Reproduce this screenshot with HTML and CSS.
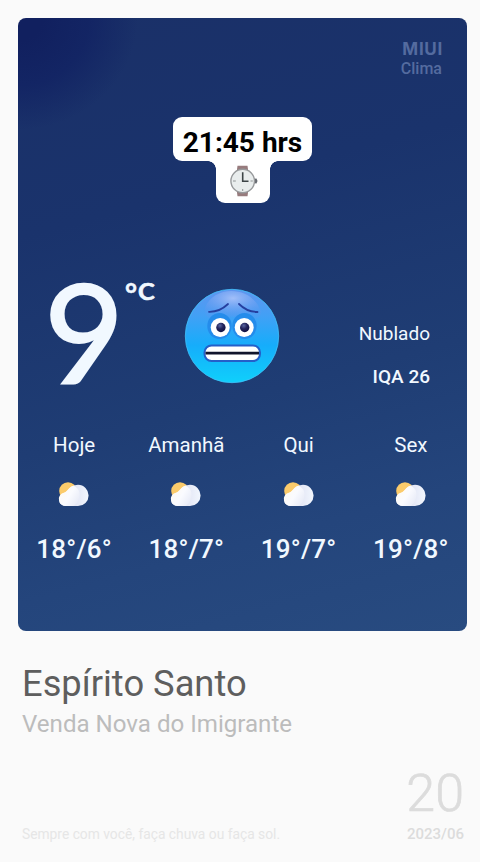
FILE: index.html
```html
<!DOCTYPE html>
<html lang="pt-BR">
<head>
<meta charset="utf-8">
<title>Clima</title>
<link rel="stylesheet" href="styles.css">
</head>
<body>
<svg class="defs" aria-hidden="true">
  <defs>
    <linearGradient id="cloudBack" x1="0" y1="0" x2="1" y2="0"><stop offset="0.3" stop-color="#ffffff"/><stop offset="0.55" stop-color="#e3e6f5"/><stop offset="1" stop-color="#f2f7fe"/></linearGradient>
    <linearGradient id="cloudFront" x1="0" y1="0" x2="1" y2="0.6"><stop offset="0" stop-color="#fffaf0"/><stop offset="0.6" stop-color="#fafbff"/><stop offset="1" stop-color="#eaedf8"/></linearGradient>
    <symbol id="partly" viewBox="0 0 32 26">
      <circle cx="10" cy="10" r="8.8" fill="#fbcb6b"/>
      <path d="M20 3.8A10.6 10.6 0 0 1 20 25H7.5A6.6 6.6 0 0 1 6 12C10 11.5 11 4 20 3.8Z" fill="url(#cloudBack)"/>
      <path d="M7.5 25A6.8 6.8 0 0 1 5.8 11.7C9.5 11.2 10.5 6 15.5 4.8C21 7 22.5 12 21 17C19.8 22 17 25 13 25Z" fill="url(#cloudFront)"/>
    </symbol>
  </defs>
</svg>
<main class="page">
  <section class="card">
    <header class="brand">
      <div class="brand-name">MIUI</div>
      <div class="brand-app">Clima</div>
    </header>
    <div class="clock">
      <div class="clock-time"><span>21:45 hrs</span></div>
      <div class="clock-stem">
        <svg class="watch" viewBox="0 0 28 32">
          <path d="M7.5.8H17.5L18.5 8H6.5ZM6.5 24H18.5L17.5 31.2H7.5Z" fill="#977b7d"/>
          <path d="M8 5H17M8 27H17" stroke="#806a6e" stroke-width="1"/>
          <path d="M23 14L26.5 13.5L27.5 16L26.5 18.5L23 18Z" fill="#666a70"/>
          <circle cx="12.7" cy="16" r="11.8" fill="#e9eded" stroke="#97999b" stroke-width="1.4"/>
          <path d="M12.7 7.2V16.2H18.5" fill="none" stroke="#3d4446" stroke-width="1.6"/>
          <path d="M3 16H5.8M20.5 16H22.8M12.7 24V26" stroke="#8e9394" stroke-width="1"/>
        </svg>
      </div>
    </div>
    <div class="current">
      <div class="temp"><span class="degree">9</span><span class="unit"><span class="ring">°</span><span class="scale">C</span></span></div>
      <svg class="face" viewBox="0 0 96 96">
        <defs>
          <linearGradient id="skin" x1="0" y1="0" x2="0" y2="1"><stop offset="0" stop-color="#6095ef"/><stop offset="0.28" stop-color="#42a0f5"/><stop offset="0.6" stop-color="#16adfb"/><stop offset="1" stop-color="#0fd0fb"/></linearGradient>
          <radialGradient id="shine" cx="0.5" cy="0.25" r="0.65"><stop offset="0" stop-color="#a2bff9"/><stop offset="1" stop-color="#6095ef" stop-opacity="0.25"/></radialGradient>
          <radialGradient id="pupil" cx="0.4" cy="0.3" r="0.7"><stop offset="0" stop-color="#5965a0"/><stop offset="0.5" stop-color="#23245c"/><stop offset="1" stop-color="#111142"/></radialGradient>
        </defs>
        <circle cx="48" cy="48" r="46.7" fill="url(#skin)" stroke="#3fc0fa" stroke-width="0.8"/>
        <path d="M21 20C29 -2 66 -4 77 23C78 30 69 33 61 31C51 28 45 28 35 31C26 33 20 28 21 20Z" fill="url(#shine)"/>
        <ellipse cx="35.5" cy="38" rx="12.2" ry="13" fill="#248ceb"/>
        <ellipse cx="60.5" cy="38" rx="12.2" ry="13" fill="#248ceb"/>
        <path d="M25 23.8C33 24 39 20.8 44 16M55 16C60 21 66 24 73.5 24" fill="none" stroke="#253f9f" stroke-width="1.8" stroke-linecap="round"/>
        <circle cx="36.2" cy="39.5" r="9.5" fill="#fff"/><circle cx="60.2" cy="39.5" r="9.5" fill="#fff"/>
        <circle cx="36.9" cy="39.5" r="4.7" fill="url(#pupil)"/><circle cx="60.7" cy="39.5" r="4.7" fill="url(#pupil)"/>
        <rect x="20.5" y="57.5" width="55.5" height="15.5" rx="7" fill="#fff" stroke="#245fc9" stroke-width="2"/>
        <path d="M21.5 65.2H75" stroke="#10142c" stroke-width="2.8"/>
      </svg>
      <div class="summary">
        <div class="condition">Nublado</div>
        <div class="air">IQA 26</div>
      </div>
    </div>
    <div class="forecast">
      <div class="day"><div class="day-name">Hoje</div><svg class="day-icon"><use href="#partly"/></svg><div class="day-temp">18°/6°</div></div>
      <div class="day"><div class="day-name">Amanhã</div><svg class="day-icon"><use href="#partly"/></svg><div class="day-temp">18°/7°</div></div>
      <div class="day"><div class="day-name">Qui</div><svg class="day-icon"><use href="#partly"/></svg><div class="day-temp">19°/7°</div></div>
      <div class="day"><div class="day-name">Sex</div><svg class="day-icon"><use href="#partly"/></svg><div class="day-temp">19°/8°</div></div>
    </div>
  </section>
  <section class="place">
    <div class="state">Espírito Santo</div>
    <div class="city">Venda Nova do Imigrante</div>
  </section>
  <footer class="footer">
    <div class="slogan">Sempre com você, faça chuva ou faça sol.</div>
    <div class="date"><div class="date-day">20</div><div class="date-month">2023/06</div></div>
  </footer>
</main>
</body>
</html>
```
FILE: styles.css
```css
* { box-sizing: border-box; }
body { margin: 0; background: #fafafa; font-family: Roboto, "Liberation Sans", sans-serif; overflow: hidden; }
.defs { position: absolute; width: 0; height: 0; }
.page { width: 480px; height: 862px; padding: 18px 13px 0 18px; display: flex; flex-direction: column; }
.card {
  height: 613px; border-radius: 8px; overflow: hidden; color: #f1f8ff;
  display: flex; flex-direction: column; flex: none;
  background:
    radial-gradient(ellipse 120px 112px at 0 0, #11205f 20%, rgba(16, 32, 98, 0.7) 60%, rgba(20, 38, 100, 0) 100%),
    linear-gradient(165deg, #1a3068 0%, #1a336c 30%, #1f3d74 60%, #24457c 80%, #284b80 100%);
}
.brand { height: 99px; padding: 21px 25px 0 0; text-align: right; color: #546b9f; }
.brand-name { font: 700 17px/20px Inter, sans-serif; letter-spacing: 0.7px; margin-right: -1px; }
.brand-app { font-size: 16px; line-height: 20px; font-weight: 500; }
.clock { height: 86px; display: flex; flex-direction: column; align-items: center; }
.clock-time { width: 139px; height: 44px; border-radius: 9px; background: #fff; color: #000; font-size: 28px; font-weight: 700; line-height: 51px; text-align: center; white-space: nowrap; }
.clock-stem { position: relative; width: 54px; height: 42px; border-radius: 0 0 9px 9px; background: #fff; display: flex; justify-content: center; padding-top: 4px; }
.clock-stem::before, .clock-stem::after { content: ""; position: absolute; top: 0; width: 8px; height: 8px; }
.clock-stem::before { right: 100%; background: radial-gradient(circle at 0 100%, transparent 7.5px, #fff 8px); }
.clock-stem::after { left: 100%; background: radial-gradient(circle at 100% 100%, transparent 7.5px, #fff 8px); }
.watch { width: 28px; height: 32px; margin-left: 2px; }
.current { height: 222px; padding: 67px 37px 0 28px; display: flex; }
.temp { width: 138px; display: flex; }
.degree { width: 79px; height: 120px; font: 400 138px/122px Lato, sans-serif; -webkit-text-stroke: 2px #f1f8ff; text-indent: -2px; }
.unit { display: flex; height: 34px; font: 700 22px/34px Lato, sans-serif; padding-top: 5px; }
.ring { width: 13px; font-size: 29px; line-height: 35px; -webkit-text-stroke: 0.5px #f1f8ff; }
.scale { transform: scaleX(1.15); transform-origin: 0 50%; -webkit-text-stroke: 0.6px #f1f8ff; }
.face { width: 96px; height: 96px; margin-top: 18px; flex: none; }
.summary { flex: 1; text-align: right; padding-top: 52px; }
.condition { font-size: 19px; line-height: 24px; }
.air { margin-top: 19px; font-size: 19px; line-height: 24px; font-weight: 500; }
.forecast { display: grid; grid-template-columns: repeat(4, 1fr); text-align: center; }
.day { display: flex; flex-direction: column; align-items: center; }
.day-name { font-size: 20.5px; line-height: 30px; margin-top: 5px; }
.day-icon { width: 32px; height: 26px; margin-top: 21px; }
.day-temp { margin-top: 26px; font-size: 26px; line-height: 32px; font-weight: 500; letter-spacing: 0.2px; }
.place { height: 130px; padding: 30px 4px 0; flex: none; white-space: nowrap; }
.state { font-size: 36.3px; line-height: 46px; color: #5e5e5e; }
.city { font-size: 24.1px; line-height: 34px; color: #bcbcbc; }
.footer { height: 101px; padding: 0 3px 0 4px; display: flex; justify-content: space-between; align-items: flex-end; flex: none; white-space: nowrap; }
.slogan { font-size: 13.8px; line-height: 20px; margin-bottom: 18px; color: #e6e6e6; }
.date { color: #dcdcdc; text-align: right; margin-bottom: 18px; }
.date-day { font-size: 52px; line-height: 54px; font-weight: 300; margin-bottom: 3px; -webkit-text-stroke: 0.7px #dcdcdc; }
.date-month { font-size: 15px; line-height: 20px; font-weight: 500; }
```
